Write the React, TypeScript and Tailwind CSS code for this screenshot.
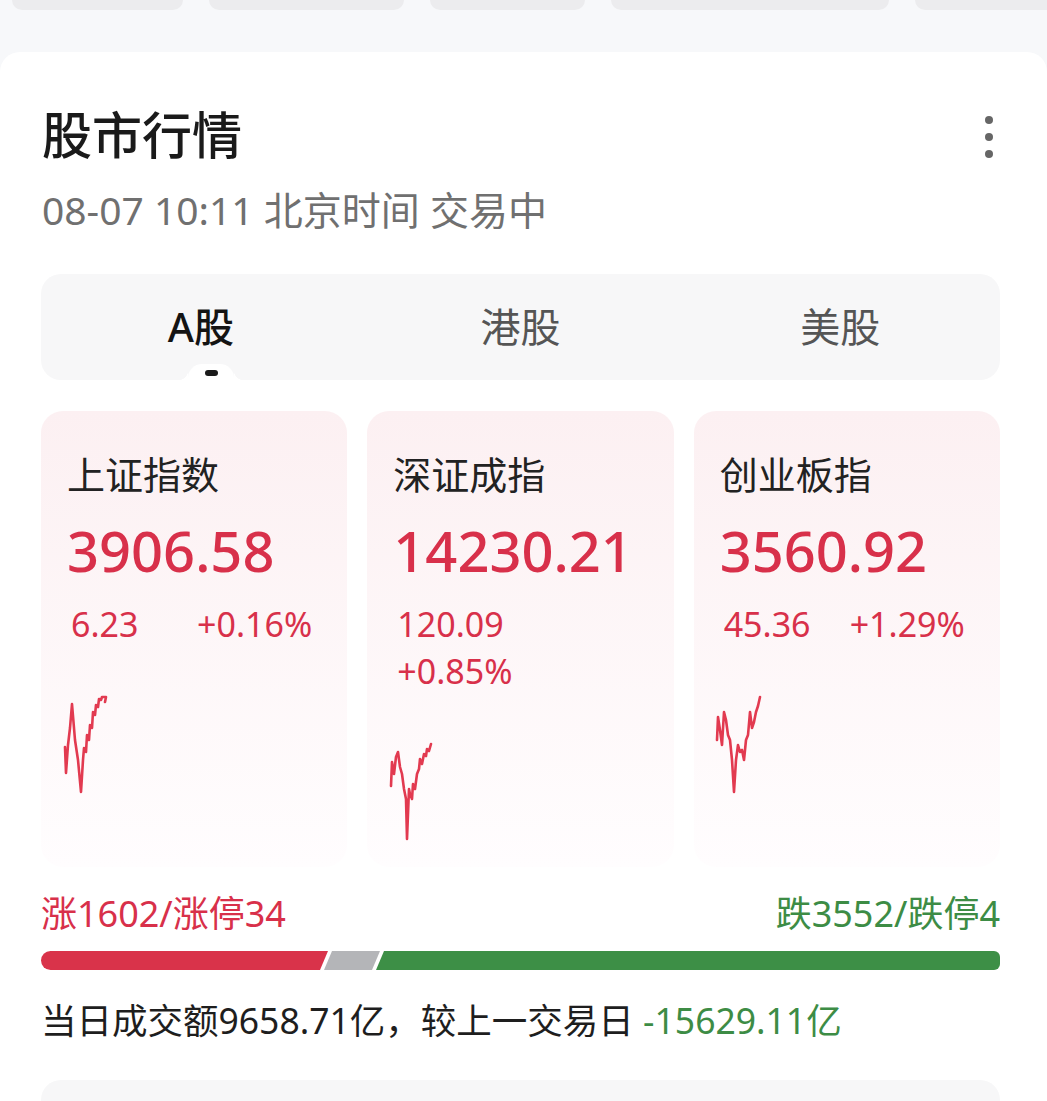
const FONT = "font-['Noto_Sans','Noto_Sans_CJK_SC',sans-serif]";

interface IndexCard {
  name: string;
  price: string;
  change: string;
  percent: string;
  stacked?: boolean;
  points: string;
}

const cards: IndexCard[] = [
  {
    name: '上证指数',
    price: '3906.58',
    change: '6.23',
    percent: '+0.16%',
    points:
      '1,52 2,78 4,50 6,33 8,9 11,45 14,65 17,97 19,65 20,53 22,57 23,40 25,45 26,30 28,33 29,17 31,20 32,10 34,12 35,4 37,5 38,2 42,2 41,7',
  },
  {
    name: '深证成指',
    price: '14230.21',
    change: '120.09',
    percent: '+0.85%',
    stacked: true,
    points:
      '1,44 2,20 4,32 6,15 8,10 10,25 12,32 14,47 16,57 17,97 19,47 20,52 22,57 23,42 25,47 27,32 29,27 30,17 32,22 34,12 36,14 37,7 39,9 41,2',
  },
  {
    name: '创业板指',
    price: '3560.92',
    change: '45.36',
    percent: '+1.29%',
    points:
      '0,45 1,22 3,35 5,50 7,17 9,25 11,40 13,45 15,65 17,97 19,65 21,50 23,57 25,55 27,65 29,45 31,40 33,17 35,33 37,27 39,17 41,11 43,2',
  },
];

const chips = ['w-[171px]', 'w-[195px]', 'w-[155px]', 'w-[278px]', 'w-[160px]'];

function Sparkline({ points }: { points: string }) {
  return (
    <svg width="46" height="100" viewBox="0 0 46 100" className="-ml-[3px] mt-[47px] overflow-visible">
      <polyline
        points={points}
        fill="none"
        stroke="#e23a50"
        strokeWidth={2.6}
        strokeLinejoin="round"
        strokeLinecap="round"
      />
    </svg>
  );
}

function MarketCard({ card }: { card: IndexCard }) {
  return (
    <div className="flex flex-col rounded-[22px] bg-linear-to-b from-[#fcf0f2] to-[#fffdfe] px-[26px] pt-[38px] pb-[25px]">
      <div className="text-[38px] leading-[50px] text-[#222]">{card.name}</div>
      <div className="mt-[16px] text-[56px] font-medium leading-[70px] text-[#d8304a]">
        {card.price}
      </div>
      <div
        className={
          card.stacked
            ? 'mt-[16px] flex flex-col pl-[4px] text-[34px] leading-[47px] text-[#d8304a]'
            : 'mt-[16px] flex pl-[4px] text-[34px] leading-[47px] text-[#d8304a]'
        }
      >
        <span className={card.stacked ? '' : 'w-[126px]'}>{card.change}</span>
        <span>{card.percent}</span>
      </div>
      <Sparkline points={card.points} />
    </div>
  );
}

export default function App() {
  return (
    <div className={`${FONT} min-h-[1101px] w-full bg-[#f7f8fa]`}>
      {/* chip row peeking from above */}
      <div className="flex h-[52px] gap-[26px] pl-[12px]">
        {chips.map((w, i) => (
          <div key={i} className={`${w} h-[10px] shrink-0 rounded-b-[14px] bg-[#ececee]`} />
        ))}
      </div>

      <div className="rounded-t-[20px] bg-white pt-[53px] pr-[47px] pl-[41px] pb-[20px]">
        <div className="flex items-start justify-between">
          <div>
            <h1 className="pl-[1px] text-[50px] font-medium leading-[60px] text-[#1a1a1a]">股市行情</h1>
            <p className="mt-[20px] pl-[1px] text-[39px] leading-[50px] text-[#707070]">
              08-07 10:11 北京时间 交易中
            </p>
          </div>
          {/* overflow menu */}
          <div className="mt-[11px] mr-[7px] flex flex-col gap-[9px]">
            <span className="h-[8px] w-[8px] rounded-full bg-[#666]" />
            <span className="h-[8px] w-[8px] rounded-full bg-[#666]" />
            <span className="h-[8px] w-[8px] rounded-full bg-[#666]" />
          </div>
        </div>

        {/* market tabs */}
        <div className="relative mt-[39px] grid h-[106px] grid-cols-3 items-center rounded-[20px] bg-[#f7f7f8] text-center text-[40px]">
          <span className="font-medium text-[#141414]">A股</span>
          <span className="text-[#555]">港股</span>
          <span className="text-[#555]">美股</span>
          <div className="absolute bottom-0 left-[137px] flex items-end">
            <div className="h-[10px] w-[10px] bg-[radial-gradient(circle_at_0_0,transparent_10px,white_10.5px)]" />
            <div className="flex h-[16px] w-[46px] items-start justify-center rounded-t-[14px] bg-white pt-[6px]">
              <div className="h-[6px] w-[13px] rounded-full bg-[#1a1a1a]" />
            </div>
            <div className="h-[10px] w-[10px] bg-[radial-gradient(circle_at_100%_0,transparent_10px,white_10.5px)]" />
          </div>
        </div>

        {/* index cards */}
        <div className="mt-[31px] grid grid-cols-3 gap-[20px]">
          {cards.map((c) => (
            <MarketCard key={c.name} card={c} />
          ))}
        </div>

        {/* advance / decline */}
        <div className="mt-[25px] flex justify-between text-[36px] leading-[44px]">
          <span className="text-[#d8304a]">涨1602/涨停34</span>
          <span className="text-[#3d8c45]">跌3552/跌停4</span>
        </div>
        <div className="mt-[15px] flex h-[19px]">
          <div className="w-[287px] rounded-l-full bg-[#d9334a] [clip-path:polygon(0_0,100%_0,calc(100%-8px)_100%,0_100%)]" />
          <div className="-ml-[4px] w-[56px] bg-[#b4b5b8] [clip-path:polygon(8px_0,100%_0,calc(100%-8px)_100%,0_100%)]" />
          <div className="-ml-[4px] flex-1 rounded-r-[6px] bg-[#3d8f46] [clip-path:polygon(8px_0,100%_0,100%_100%,0_100%)]" />
        </div>

        <p className="mt-[26px] text-[35.5px] leading-[48px] text-[#1e1e1e]">
          当日成交额9658.71亿，较上一交易日 <span className="text-[#3d8c45]">-15629.11亿</span>
        </p>

        <div className="mt-[36px] h-[120px] rounded-[20px] bg-[#f7f7f8]" />
      </div>
    </div>
  );
}
